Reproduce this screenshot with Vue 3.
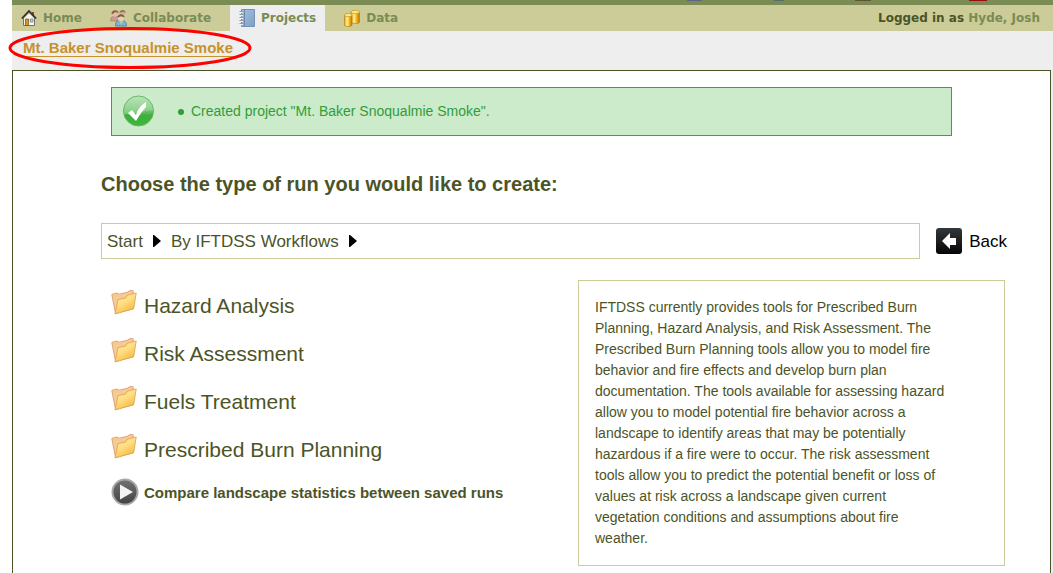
<script setup>
const tabs = [
  { name: 'Home', icon: 'home' },
  { name: 'Collaborate', icon: 'people' },
  { name: 'Projects', icon: 'book', active: true },
  { name: 'Data', icon: 'data' },
]
const crumbs = ['Start', 'By IFTDSS Workflows']
const workflows = ['Hazard Analysis', 'Risk Assessment', 'Fuels Treatment', 'Prescribed Burn Planning']
const description = [
  'IFTDSS currently provides tools for Prescribed Burn',
  'Planning, Hazard Analysis, and Risk Assessment. The',
  'Prescribed Burn Planning tools allow you to model fire',
  'behavior and fire effects and develop burn plan',
  'documentation. The tools available for assessing hazard',
  'allow you to model potential fire behavior across a',
  'landscape to identify areas that may be potentially',
  'hazardous if a fire were to occur. The risk assessment',
  'tools allow you to predict the potential benefit or loss of',
  'values at risk across a landscape given current',
  'vegetation conditions and assumptions about fire',
  'weather.',
]
</script>

<template>
  <div class="page">
    <header>
      <div class="banner">
        <svg width="366" height="1" aria-hidden="true">
          <path d="M0 0h15v1H0z" fill="#5c6487" />
          <path d="M87 0h10v1H87z" fill="#55706c" />
          <path d="M168 0h16v1h-16z" fill="#5d5635" />
          <path d="M282 0h18v1h-18z" fill="#9c0d12" />
        </svg>
      </div>
      <div class="navbar">
        <nav>
          <a v-for="t in tabs" :key="t.name" href="#" class="tab" :class="{ active: t.active }">
            <svg v-if="t.icon === 'home'" width="16" height="18" viewBox="0 0 16 18" aria-hidden="true">
              <path d="M11 3h2v4h-2z" fill="#a33a28" />
              <path d="M2.500 9v7.500h11V9L8 3.500z" fill="#f5f3ea" stroke="#77736a" />
              <path d="M0.800 9.500L8 2l7.200 7.500" fill="none" stroke="#33302d" stroke-width="1.700" />
              <path d="M4.500 10h3v6.500h-3z" fill="#d99526" stroke="#70521e" stroke-width=".7" />
              <path d="M9.300 10h2.700v3H9.300z" fill="#b9d2ea" stroke="#66778a" stroke-width=".7" />
            </svg>
            <svg v-else-if="t.icon === 'people'" width="17" height="18" viewBox="0 0 17 18" aria-hidden="true">
              <path d="M.5 12c0-4 2-5 5-5s4 2 4 5z" fill="#c99c91" stroke="#99786b" stroke-width=".6" />
              <circle cx="5" cy="4.500" r="3.300" fill="#e7bc9d" />
              <path d="M1.500 5C1 0 9 0 8.500 4.500 7 2.500 4 3 3 5z" fill="#8a6048" />
              <circle cx="12.500" cy="4" r="2.700" fill="#dcae8c" />
              <path d="M9.500 4c0-4 6.500-4 6 0-1.500-1.500-4-1.500-6 0z" fill="#8b7461" />
              <path d="M5.500 17c0-5 2-6 5.500-6s5.500 2 5.500 6z" fill="#7ab5dc" stroke="#4f7a9c" stroke-width=".8" />
              <path d="M9.500 12l1.500 4 2-4z" fill="#a9d48c" />
              <circle cx="11" cy="9" r="3.200" fill="#f0cdaa" />
              <path d="M7.500 9c-.5-5 7.500-5 7 0-1.500-2-5-2-7 0z" fill="#696052" />
            </svg>
            <svg v-else-if="t.icon === 'book'" width="16" height="18" viewBox="0 0 16 18" aria-hidden="true">
              <defs>
                <linearGradient id="book" x1="0" y1="0" x2="1" y2="1">
                  <stop stop-color="#a9c0dd" /><stop offset="1" stop-color="#7e9fc8" />
                </linearGradient>
              </defs>
              <path d="M2.500.5h13v17h-13z" fill="url(#book)" stroke="#7591b5" />
              <path d="M5.500 1v16" stroke="#6c86ab" />
              <path d="M.5 2.500h4m-4 3h4m-4 3h4m-4 3h4m-4 3h4" stroke="#8d99a8" />
              <path d="M1 3.500h3m-3 3h3m-3 3h3m-3 3h3m-3 3h3" stroke="#eef2f7" />
            </svg>
            <svg v-else width="16" height="18" viewBox="0 0 16 18" aria-hidden="true">
              <defs>
                <linearGradient id="gold">
                  <stop stop-color="#e4a51b" /><stop offset=".35" stop-color="#fff0a0" />
                  <stop offset=".65" stop-color="#f3b91e" /><stop offset="1" stop-color="#b47200" />
                </linearGradient>
              </defs>
              <path d="M7 3v10c0 2 8.500 2 8.500 0V3z" fill="url(#gold)" stroke="#bb8513" stroke-width=".7" />
              <ellipse cx="11.250" cy="3" rx="4.250" ry="1.700" fill="#ffe68b" stroke="#c38b15" stroke-width=".6" />
              <path d="M.5 6v10c0 2 7.500 2 7.500 0V6z" fill="url(#gold)" stroke="#bb8513" stroke-width=".7" />
              <ellipse cx="4.250" cy="6" rx="3.750" ry="1.600" fill="#ffe68b" stroke="#c38b15" stroke-width=".6" />
            </svg>
            <span>{{ t.name }}</span>
          </a>
        </nav>
        <p class="user">Logged in as <a href="#">Hyde, Josh</a></p>
      </div>
      <div class="subbar">
        <a href="#">Mt. Baker Snoqualmie Smoke</a>
        <svg class="ring" width="244" height="44" viewBox="0 0 244 44" aria-hidden="true">
          <ellipse cx="122" cy="22" rx="120" ry="19.500" fill="none" stroke="#f00" stroke-width="3" />
        </svg>
      </div>
    </header>

    <main>
      <div class="alert" role="status">
        <svg width="34" height="34" viewBox="0 0 34 34" aria-hidden="true">
          <defs>
            <linearGradient id="ok" x1="0" y1="0" x2="0" y2="1">
              <stop stop-color="#a9dca8" /><stop offset=".5" stop-color="#6cc46a" />
              <stop offset=".65" stop-color="#3fae3e" /><stop offset="1" stop-color="#3db73a" />
            </linearGradient>
          </defs>
          <circle cx="16.500" cy="16" r="15" fill="url(#ok)" stroke="#62b561" />
          <path d="M2 16a14.500 14.500 0 0 1 29 0c-7-3-12 4-29 3z" fill="#fff" opacity=".22" />
          <path d="M6 18l4-3 4 5C16 14 19 10 24 7v5c-4 4-7 9-10 14z" fill="#fff" />
        </svg>
        <ul><li>Created project "Mt. Baker Snoqualmie Smoke".</li></ul>
      </div>

      <h1>Choose the type of run you would like to create:</h1>

      <div class="path-row">
        <nav class="crumbs" aria-label="Breadcrumb">
          <template v-for="c in crumbs" :key="c">
            <a href="#">{{ c }}</a>
            <svg width="8" height="12" viewBox="0 0 8 12" aria-hidden="true"><path d="M0 0h1l7 6-7 6H0z" fill="#000" /></svg>
          </template>
        </nav>
        <button type="button" class="back">
          <svg width="26" height="26" viewBox="0 0 26 26" aria-hidden="true">
            <defs>
              <linearGradient id="dark" x1="0" y1="0" x2="0" y2="1">
                <stop stop-color="#34383b" /><stop offset="1" stop-color="#050506" />
              </linearGradient>
            </defs>
            <rect width="26" height="26" rx="3" fill="url(#dark)" />
            <path d="M6 13l8-8v5h6v7h-6v4z" fill="#fff" />
          </svg>
          Back
        </button>
      </div>

      <div class="columns">
        <ul class="workflows">
          <li v-for="w in workflows" :key="w">
            <a href="#">
              <svg width="26" height="25" viewBox="0 0 26 25" aria-hidden="true">
                <defs>
                  <linearGradient id="folder" x1="0" y1="0" x2=".6" y2="1">
                    <stop stop-color="#ffe9a6" /><stop offset=".5" stop-color="#ffdf85" /><stop offset="1" stop-color="#f9b93c" />
                  </linearGradient>
                </defs>
                <path d="M.8 4.500L6 3l2.500 1.200L17 2l1-1.200 4-.3.500 2.500 1.500 2-2 14-17.500 4.500z" fill="#f6cb93" stroke="#d9a26b" stroke-width=".9" stroke-linejoin="round" />
                <path d="M7 9.500l7.500-1.500 2.200-3L25.200 3l-2.500 15.500L4 24z" fill="url(#folder)" stroke="#e0a558" stroke-width=".9" stroke-linejoin="round" />
              </svg>
              <span>{{ w }}</span>
            </a>
          </li>
          <li class="compare">
            <a href="#">
              <svg width="28" height="28" viewBox="0 0 28 28" aria-hidden="true">
                <defs>
                  <linearGradient id="play" x1="0" y1="0" x2="0" y2="1">
                    <stop stop-color="#737373" /><stop offset="1" stop-color="#414141" />
                  </linearGradient>
                </defs>
                <circle cx="14" cy="14" r="12.500" fill="url(#play)" stroke="#a8a8a8" stroke-width="2" />
                <path d="M9 6.500L22 14 9 21.500z" fill="#f3f3f3" />
              </svg>
              <span>Compare landscape statistics between saved runs</span>
            </a>
          </li>
        </ul>
        <p class="description">
          <template v-for="line in description" :key="line">{{ line }}<br></template>
        </p>
      </div>
    </main>
  </div>
</template>

<style>
body {
  margin: 0;
  background: #fff;
}
</style>

<style scoped>
.page {
  box-sizing: border-box;
  min-height: 100vh;
  margin-left: 12px;
  padding-right: 2px;
  display: flex;
  flex-direction: column;
  background: #eee;
  color: #4b5427;
  font: 14px/21px "Liberation Sans", Arial, sans-serif;
}
a {
  color: inherit;
  text-decoration: none;
}
ul {
  margin: 0;
  padding: 0;
}
svg {
  display: block;
  flex: none;
}
header {
  margin-right: -2px;
}
.banner {
  height: 5px;
  background: #7a8b54;
  display: flex;
  justify-content: flex-end;
}
.navbar {
  height: 26px;
  background: #cc9;
  display: flex;
  justify-content: space-between;
  font: bold 12px/26px "DejaVu Sans", Verdana, sans-serif;
}
nav {
  display: flex;
}
.navbar nav {
  gap: 10px;
}
.tab {
  display: flex;
  align-items: center;
  gap: 6px;
  padding: 0 9px;
  color: #7a8b54;
}
.tab.active {
  background: #eee;
}
.user {
  margin: 0 13px 0 0;
}
.user a {
  color: #7a8b54;
}
.subbar {
  position: relative;
  height: 39px;
  padding-left: 11px;
  font-size: 15px;
  font-weight: bold;
  line-height: 34px;
}
.subbar a {
  color: #c8922b;
  text-decoration: underline;
  text-decoration-thickness: 1px;
  text-underline-offset: 3px;
}
.ring {
  position: absolute;
  left: -4px;
  top: -5px;
}
main {
  flex: 1;
  padding: 16px 43px 7px 88px;
  background: #fff;
  border: solid #4b5427;
  border-width: 1px 1px 0;
}
.alert {
  display: flex;
  align-items: center;
  height: 47px;
  margin: 0 55px 0 10px;
  padding-left: 10px;
  background: #cbebcb;
  border: 1px solid #3fa044;
  color: #339c39;
}
.alert ul {
  padding-left: 22px;
  list-style: none;
}
.alert li {
  display: flex;
  align-items: center;
  gap: 7px;
}
.alert li::before {
  content: "";
  width: 6px;
  height: 6px;
  border-radius: 50%;
  background: #339c39;
}
h1 {
  margin: 36px 0 27px;
  font-size: 20px;
  line-height: 24px;
}
.path-row {
  display: flex;
  align-items: center;
  gap: 16px;
  font-size: 17px;
}
.crumbs {
  flex: 1;
  align-items: center;
  gap: 10px;
  height: 34px;
  padding-left: 5px;
  border: 1px solid #cc9;
}
.back {
  display: flex;
  align-items: center;
  gap: 7px;
  padding: 0;
  border: 0;
  background: none;
  color: #000;
  font: inherit;
}
.columns {
  display: flex;
  justify-content: space-between;
  align-items: flex-start;
  margin: 21px 2px 0 10px;
}
.workflows {
  list-style: none;
  padding-top: 1px;
}
.workflows a {
  display: flex;
  gap: 7px;
  height: 39px;
  padding-top: 9px;
  font-size: 21px;
  line-height: 31px;
}
.workflows .compare a {
  align-items: center;
  gap: 5px;
  height: 28px;
  padding-top: 5px;
  font-size: 15px;
  font-weight: bold;
}
.description {
  box-sizing: border-box;
  width: 427px;
  margin: 0;
  padding: 16px;
  border: 1px solid #cc9;
}
</style>
